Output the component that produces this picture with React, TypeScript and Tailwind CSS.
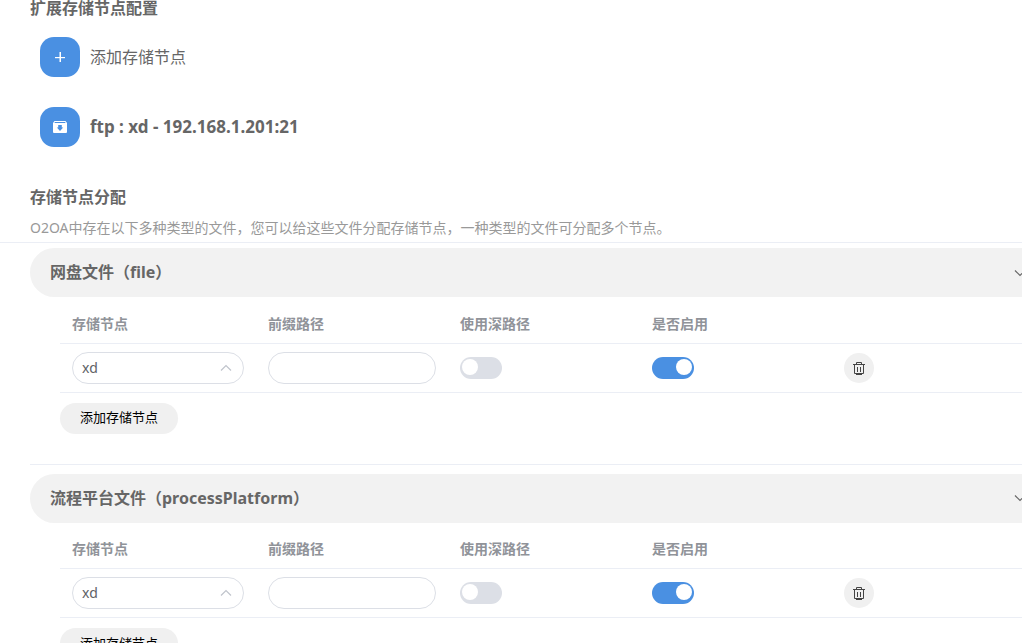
import { useState } from "react";

type IconProps = { className?: string };

function PlusIcon({ className }: IconProps) {
  return (
    <svg viewBox="0 0 10 10" className={className} fill="currentColor" aria-hidden="true">
      <rect x="0" y="5" width="10" height="1.200" />
      <rect x="4.500" y="0" width="1.500" height="10" />
    </svg>
  );
}

function ArchiveIcon({ className }: IconProps) {
  return (
    <svg viewBox="0 0 14 12" className={className} aria-hidden="true">
      <path
        fill="currentColor"
        fillRule="evenodd"
        d="M1.500 0h11L14 2v9a1 1 0 0 1-1 1H1a1 1 0 0 1-1-1V2zM2 1l-.7 1h11.400L12 1zM5.200 4v2.500H3.800L7 10l3.200-3.500H8.800V4z"
      />
    </svg>
  );
}

function TrashIcon({ className }: IconProps) {
  return (
    <svg viewBox="0 0 12 14" className={className} fill="none" stroke="currentColor" aria-hidden="true">
      <path d="M0 3.500h12M3.500 3.500v-2h5v2M1.500 3.500v9h9v-9M4.500 6v5M7.500 6v5M3 13.500h6" />
    </svg>
  );
}

function Chevron({ className }: IconProps) {
  return (
    <svg viewBox="0 0 12 8" className={className} fill="none" stroke="currentColor" strokeWidth="1.200" aria-hidden="true">
      <path d="M1 1.500l5 5 5-5" />
    </svg>
  );
}

function Switch({ label, initial }: { label: string; initial: boolean }) {
  const [on, setOn] = useState(initial);
  return (
    <button
      type="button"
      role="switch"
      aria-checked={on}
      aria-label={label}
      onClick={() => setOn(!on)}
      className={
        on
          ? "flex h-[22px] w-[42px] justify-end rounded-full bg-[#4a90e2] p-0.5"
          : "flex h-[22px] w-[42px] justify-start rounded-full bg-[#dcdfe6] p-0.5"
      }
    >
      <span className="size-4 rounded-full bg-white" />
    </button>
  );
}

const columns = ["存储节点", "前缀路径", "使用深路径", "是否启用"];

function StorageSection({ title }: { title: string }) {
  return (
    <section>
      <h3 className="h-[49px] rounded-l-full bg-[#f2f2f2] text-base font-bold">
        <button type="button" className="flex h-full w-full items-center justify-between pl-5">
          <span className="pb-px">{title}</span>
          <Chevron className="-mr-1 h-2 w-3 shrink-0" />
        </button>
      </h3>
      <div className="pb-[30px] pl-[30px] pt-2">
        <table className="w-full table-fixed text-left text-sm">
          <colgroup>
            <col className="w-[196px]" />
            <col className="w-[192px]" />
            <col className="w-[192px]" />
            <col className="w-[192px]" />
            <col />
          </colgroup>
          <thead>
            <tr className="h-[38px] border-b border-[#ebeef5] text-[#909399]">
              {columns.map((name) => (
                <th key={name} scope="col" className="px-3 font-bold">
                  {name}
                </th>
              ))}
              <td />
            </tr>
          </thead>
          <tbody>
            <tr className="h-[49px] border-b border-[#ebeef5]">
              <td className="px-3">
                <div className="relative">
                  <select
                    aria-label="存储节点"
                    className="block h-8 w-full appearance-none rounded-full border border-[#dcdfe6] bg-white px-[9px] text-sm text-[#606266]"
                  >
                    <option>xd</option>
                  </select>
                  <Chevron className="pointer-events-none absolute right-3 top-3 h-2 w-3 rotate-180 text-[#c0c4cc]" />
                </div>
              </td>
              <td className="px-3">
                <input
                  type="text"
                  aria-label="前缀路径"
                  className="block h-8 w-full rounded-full border border-[#dcdfe6] bg-white px-3 text-sm"
                />
              </td>
              <td className="px-3">
                <Switch label="使用深路径" initial={false} />
              </td>
              <td className="px-3">
                <Switch label="是否启用" initial={true} />
              </td>
              <td className="px-3">
                <button
                  type="button"
                  aria-label="删除"
                  className="flex size-[30px] items-center justify-center rounded-full bg-[#f0f0f0] text-[#444444]"
                >
                  <TrashIcon className="h-[14px] w-3" />
                </button>
              </td>
            </tr>
          </tbody>
        </table>
        <button type="button" className="mt-[10px] h-[31px] rounded-full bg-[#f0f0f0] px-5 text-[13px] text-black">
          添加存储节点
        </button>
      </div>
    </section>
  );
}

export default function App() {
  return (
    <main className="h-screen overflow-hidden bg-white font-['Noto_Sans','Noto_Sans_CJK_SC',sans-serif] text-[#666666]">
      <div className="px-[30px]">
        <h2 className="text-base leading-4 font-bold">扩展存储节点配置</h2>
        <div className="mt-[21px] flex flex-col gap-[30px] pl-[10px]">
          <button type="button" className="flex items-center gap-[10px] text-left">
            <span className="flex size-10 items-center justify-center rounded-[14px] bg-[#4a90e2] text-white">
              <PlusIcon className="size-[10px]" />
            </span>
            <span>添加存储节点</span>
          </button>
          <button type="button" className="flex items-center gap-[10px] text-left text-[17px] font-bold">
            <span className="flex size-10 items-center justify-center rounded-[14px] bg-[#4a90e2] text-white">
              <ArchiveIcon className="h-3 w-[14px]" />
            </span>
            <span>ftp : xd - 192.168.1.201:21</span>
          </button>
        </div>
        <h2 className="mt-[38px] text-base font-bold">存储节点分配</h2>
        <p className="mt-[9px] pb-1 text-sm text-[#999999]">
          O2OA中存在以下多种类型的文件，您可以给这些文件分配存储节点，一种类型的文件可分配多个节点。
        </p>
      </div>
      <div className="border-t border-[#ebeef5] pt-[5px] pl-[30px]">
        <StorageSection title="网盘文件（file）" />
        <div className="border-t border-[#ebeef5] pt-[9px]">
          <StorageSection title="流程平台文件（processPlatform）" />
        </div>
      </div>
    </main>
  );
}
